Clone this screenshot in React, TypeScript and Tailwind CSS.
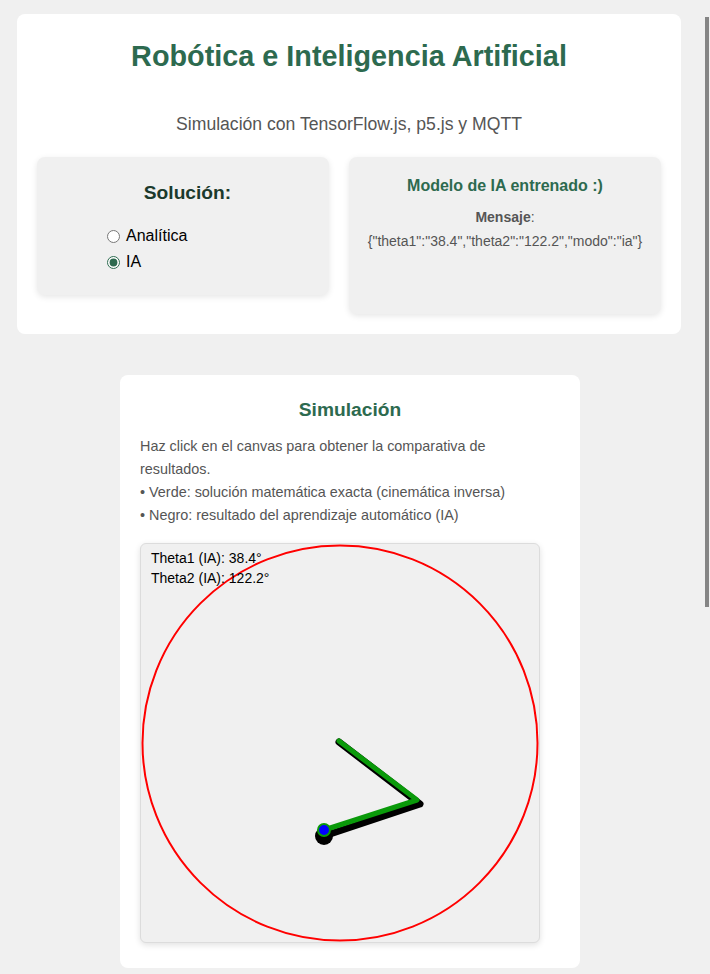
import React, { useState } from "react";

const font = { fontFamily: '"Liberation Sans", Arial, sans-serif' };

const ArmCanvas = ({ theta1, theta2 }: { theta1: string; theta2: string }) => {
  return (
    <div className="w-[400px] h-[400px] border border-[#dcdcdc] rounded-md bg-[#f0f0f0] shadow-[0_2px_6px_rgba(0,0,0,0.12)] overflow-hidden">
      <svg width="398" height="398" viewBox="0 0 398 398" className="block">
        <circle cx="199" cy="199" r="197.5" fill="none" stroke="#ff0000" strokeWidth="2" />
        <text x="10" y="19" fontSize="14" fill="#000" fontFamily="Liberation Sans, Arial, sans-serif">
          Theta1 (IA): {theta1}°
        </text>
        <text x="10" y="39" fontSize="14" fill="#000" fontFamily="Liberation Sans, Arial, sans-serif">
          Theta2 (IA): {theta2}°
        </text>
        {/* IA result (black) */}
        <polyline
          points="198,198 279,260 183,292"
          fill="none"
          stroke="#000"
          strokeWidth="7"
          strokeLinecap="round"
          strokeLinejoin="round"
        />
        <circle cx="183" cy="292" r="9" fill="#000" />
        {/* exact solution (green) */}
        <polyline
          points="198,197 276,256 183,286"
          fill="none"
          stroke="#0a9a0a"
          strokeWidth="5"
          strokeLinecap="round"
          strokeLinejoin="round"
        />
        <circle cx="183" cy="286" r="6" fill="#0000ff" stroke="#0a9a0a" strokeWidth="2" />
      </svg>
    </div>
  );
};

export default function App() {
  const [modo, setModo] = useState("ia");
  const mensaje = '{"theta1":"38.4","theta2":"122.2","modo":"ia"}';

  return (
    <div className="min-h-[974px] bg-[#f0f0f0] pt-[14px]" style={font}>
      <div className="ml-[17px] w-[664px] h-[320px] bg-white rounded-lg px-5 pt-[26px]">
        <h1 className="text-[28.8px] leading-[33px] font-bold text-[#2d6a4f] text-center">
          Robótica e Inteligencia Artificial
        </h1>
        <p className="mt-[41px] text-[17.6px] leading-[20px] text-[#555] text-center">
          Simulación con TensorFlow.js, p5.js y MQTT
        </p>

        <div className="mt-[23px] flex items-start gap-5">
          <div className="w-[292px] h-[138px] bg-[#f0f0f0] rounded-lg shadow-[0_2px_6px_rgba(0,0,0,0.1)] pt-[25px]">
            <h3 className="text-[19.2px] leading-[22px] font-bold text-[#1b3a2c] text-center pl-[9px]">
              Solución:
            </h3>
            <div className="mt-[19px] pl-[70px] flex flex-col">
              <label className="flex items-center gap-[6px] h-[26px] text-[16px] text-black">
                <input
                  type="radio"
                  name="modo"
                  checked={modo === "analitica"}
                  onChange={() => setModo("analitica")}
                  className="w-[13px] h-[13px] m-0 accent-[#2d6a4f]"
                />
                Analítica
              </label>
              <label className="flex items-center gap-[6px] h-[26px] text-[16px] text-black">
                <input
                  type="radio"
                  name="modo"
                  checked={modo === "ia"}
                  onChange={() => setModo("ia")}
                  className="w-[13px] h-[13px] m-0 accent-[#2d6a4f]"
                />
                IA
              </label>
            </div>
          </div>

          <div className="flex-1 h-[157px] bg-[#f0f0f0] rounded-lg shadow-[0_2px_6px_rgba(0,0,0,0.1)] pt-[20px] text-center">
            <h3 className="text-[16px] leading-[18px] font-bold text-[#2d6a4f]">
              Modelo de IA entrenado :)
            </h3>
            <p className="mt-[10px] text-[14px] leading-[24px] text-[#555]">
              <b>Mensaje</b>:
              <br />
              {mensaje}
            </p>
          </div>
        </div>
      </div>

      <div className="mt-[41px] ml-[120px] w-[460px] h-[593px] bg-white rounded-lg px-5 pt-[24px]">
        <h2 className="text-[19.2px] leading-[22px] font-bold text-[#2d6a4f] text-center">Simulación</h2>
        <p className="mt-[14px] max-w-[412px] text-[14.4px] leading-[23px] text-[#555]">
          Haz click en el canvas para obtener la comparativa de resultados.
          <br />• Verde: solución matemática exacta (cinemática inversa)
          <br />• Negro: resultado del aprendizaje automático (IA)
        </p>
        <div className="mt-[16px]">
          <ArmCanvas theta1="38.4" theta2="122.2" />
        </div>
      </div>

      {/* page scrollbar thumb */}
      <div className="fixed right-[1px] top-[17px] w-[4px] h-[590px] bg-[#858585]" />
    </div>
  );
}
